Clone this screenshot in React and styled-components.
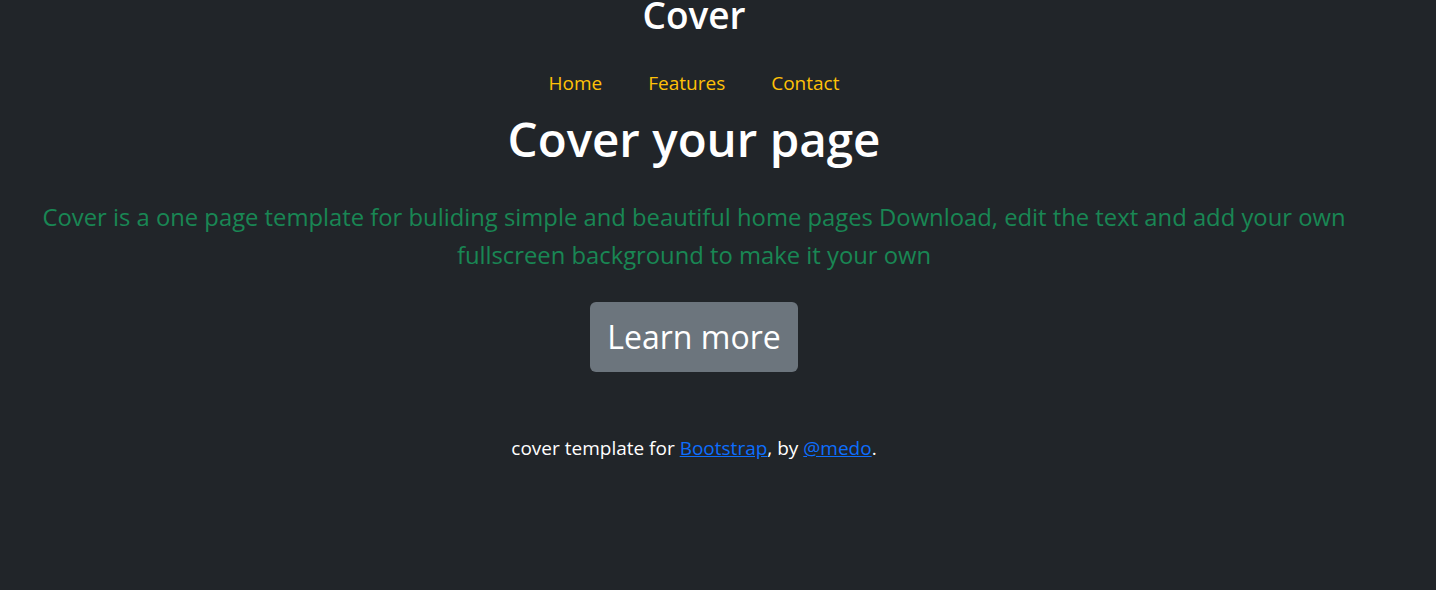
import React from "react";
import styled, { createGlobalStyle } from "styled-components";

const Global = createGlobalStyle`
  html, body { margin: 0; padding: 0; background: #212529; }
  body {
    font-family: "Open Sans", "Noto Sans", sans-serif;
    color: #ffffff;
    height: 590px;
    overflow: hidden;
  }
`;

const Page = styled.div`
  width: 1388px;
  display: flex;
  flex-direction: column;
  align-items: center;
  text-align: center;
`;

const Header = styled.header`
  display: flex;
  flex-direction: column;
  align-items: center;
  margin-top: -7px;
`;

const Brand = styled.h3`
  margin: 0;
  font-size: 37px;
  font-weight: 600;
  line-height: 1.2;
  color: #fff;
`;

const Nav = styled.nav`
  display: flex;
  gap: 26px;
  margin-top: 32px;
`;

const NavLink = styled.a`
  color: #ffc107;
  font-size: 19px;
  line-height: 1.5;
  text-decoration: none;
  padding: 0 10px;
`;

const Main = styled.main`
  display: flex;
  flex-direction: column;
  align-items: center;
`;

const Title = styled.h1`
  margin: 12px 0 0;
  font-size: 47.5px;
  font-weight: 600;
  line-height: 1.2;
`;

const Lead = styled.p`
  margin: 31px 0 0;
  font-size: 23.8px;
  line-height: 38px;
  color: #198754;
  padding: 0 20px;
`;

const Button = styled.a`
  display: inline-block;
  margin-top: 28px;
  background: #6c757d;
  color: #fff;
  font-size: 32px;
  line-height: 1.5;
  padding: 11px 17px;
  border-radius: 6px;
  text-decoration: none;
`;

const Footer = styled.footer`
  margin-top: 62px;
  font-size: 19px;
  line-height: 1.5;
  color: #fff;
`;

const FootLink = styled.a`
  color: #0d6efd;
  text-decoration: underline;
`;

export default function App() {
  return (
    <>
      <Global />
      <Page>
        <Header>
          <Brand>Cover</Brand>
          <Nav>
            <NavLink href="#">Home</NavLink>
            <NavLink href="#">Features</NavLink>
            <NavLink href="#">Contact</NavLink>
          </Nav>
        </Header>
        <Main>
          <Title>Cover your page</Title>
          <Lead>
            Cover is a one page template for buliding simple and beautiful home pages Download, edit the text and add your own fullscreen background to make it your own
          </Lead>
          <Button href="#">Learn more</Button>
        </Main>
        <Footer>
          cover template for <FootLink href="#">Bootstrap</FootLink>, by <FootLink href="#">@medo</FootLink>.
        </Footer>
      </Page>
    </>
  );
}
